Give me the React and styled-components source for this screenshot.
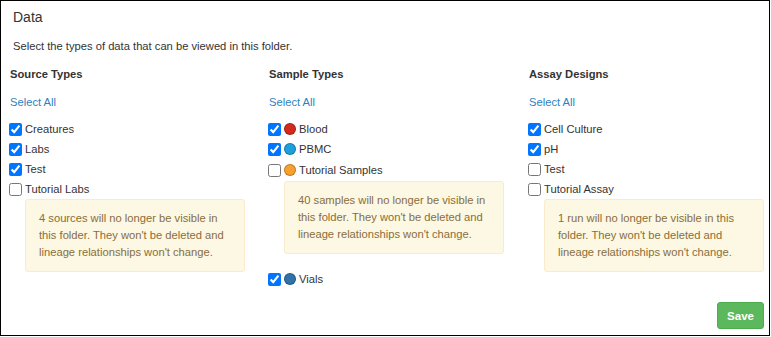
import React from 'react';
import styled, { createGlobalStyle } from 'styled-components';

const GlobalStyle = createGlobalStyle`
body {
  margin: 0;
  background: #fff;
  font-family: "Liberation Sans", Arial, sans-serif;
  font-size: 11.2px;
  color: #333;
}
`

const Panel = styled.div`
display: flex;
flex-direction: column;
box-sizing: border-box;
width: 770px;
height: 336px;
border: 1px solid #000;
background: #fff;
`

const Heading = styled.div`
padding: 8px 12px 0;
font-size: 14px;
line-height: 16px;
color: #333;
`

const Intro = styled.div`
margin-top: 14px;
padding-left: 12px;
line-height: 14px;
color: #333;
`

const Columns = styled.div`
display: grid;
grid-template-columns: 259px 260px 1fr;
padding-left: 8px;
margin-top: 14px;
`

const Column = styled.div`
display: flex;
flex-direction: column;
`

const ColumnTitle = styled.div`
padding-left: 1px;
font-weight: bold;
line-height: 14px;
color: #333;
`

const SelectAll = styled.a`
margin-top: 14px;
margin-bottom: 10px;
padding-left: 1px;
line-height: 14px;
color: #2f7fc1;
text-decoration: none;
cursor: pointer;
`

const Row = styled.label`
display: flex;
align-items: center;
height: ${p => (p.$tall ? '22px' : '20px')};
color: #333;
`

const Box = styled.input`
width: 13px;
height: 13px;
margin: 0 3px 0 0;
`

const Dot = styled.span`
display: inline-block;
box-sizing: border-box;
width: 12px;
height: 12px;
border-radius: 50%;
margin-right: 3px;
background: ${p => p.$color};
border: 1px solid rgba(0, 0, 0, 0.25);
`

const Warning = styled.div`
box-sizing: border-box;
width: 220px;
margin: 0 0 15px 16px;
padding: 10px 10px 10px 13px;
background: #fcf8e3;
border: 1px solid #faebcc;
border-radius: 3px;
color: #8a6d3b;
line-height: 17px;
`

const Footer = styled.div`
display: flex;
justify-content: flex-end;
margin-top: auto;
padding: 0 5px 6px 0;
`

const SaveButton = styled.button`
width: 47px;
height: 27px;
border: 1px solid #4cae4c;
border-radius: 3px;
background: #5cb85c;
color: #fff;
font-family: "Liberation Sans", Arial, sans-serif;
font-size: 11.5px;
font-weight: bold;
cursor: pointer;
`

const columns = [
  {
    title: 'Source Types',
    items: [
      { name: 'Creatures', checked: true },
      { name: 'Labs', checked: true },
      { name: 'Test', checked: true },
      { name: 'Tutorial Labs', checked: false, warning: '4 sources will no longer be visible in this folder. They won\'t be deleted and lineage relationships won\'t change.' },
    ],
  },
  {
    title: 'Sample Types',
    items: [
      { name: 'Blood', checked: true, color: '#d42a1e' },
      { name: 'PBMC', checked: true, color: '#1c9fdc' },
      { name: 'Tutorial Samples', checked: false, color: '#f7a02e', tall: true, warning: '40 samples will no longer be visible in this folder. They won\'t be deleted and lineage relationships won\'t change.' },
      { name: 'Vials', checked: true, color: '#3173a8' },
    ],
  },
  {
    title: 'Assay Designs',
    items: [
      { name: 'Cell Culture', checked: true },
      { name: 'pH', checked: true },
      { name: 'Test', checked: false },
      { name: 'Tutorial Assay', checked: false, warning: '1 run will no longer be visible in this folder. They won\'t be deleted and lineage relationships won\'t change.' },
    ],
  },
]

const App = () => {
    return (
        <>
        <GlobalStyle />
        <Panel>
            <Heading>Data</Heading>
            <Intro>Select the types of data that can be viewed in this folder.</Intro>
            <Columns>
                {columns.map(col => (
                    <Column key={col.title}>
                        <ColumnTitle>{col.title}</ColumnTitle>
                        <SelectAll>Select All</SelectAll>
                        {col.items.map(item => (
                            <React.Fragment key={item.name}>
                                <Row $tall={item.tall}>
                                    <Box type="checkbox" defaultChecked={item.checked} />
                                    {item.color && <Dot $color={item.color} />}
                                    {item.name}
                                </Row>
                                {item.warning && <Warning>{item.warning}</Warning>}
                            </React.Fragment>
                        ))}
                    </Column>
                ))}
            </Columns>
            <Footer>
                <SaveButton>Save</SaveButton>
            </Footer>
        </Panel>
        </>
    );
}

export default App;
